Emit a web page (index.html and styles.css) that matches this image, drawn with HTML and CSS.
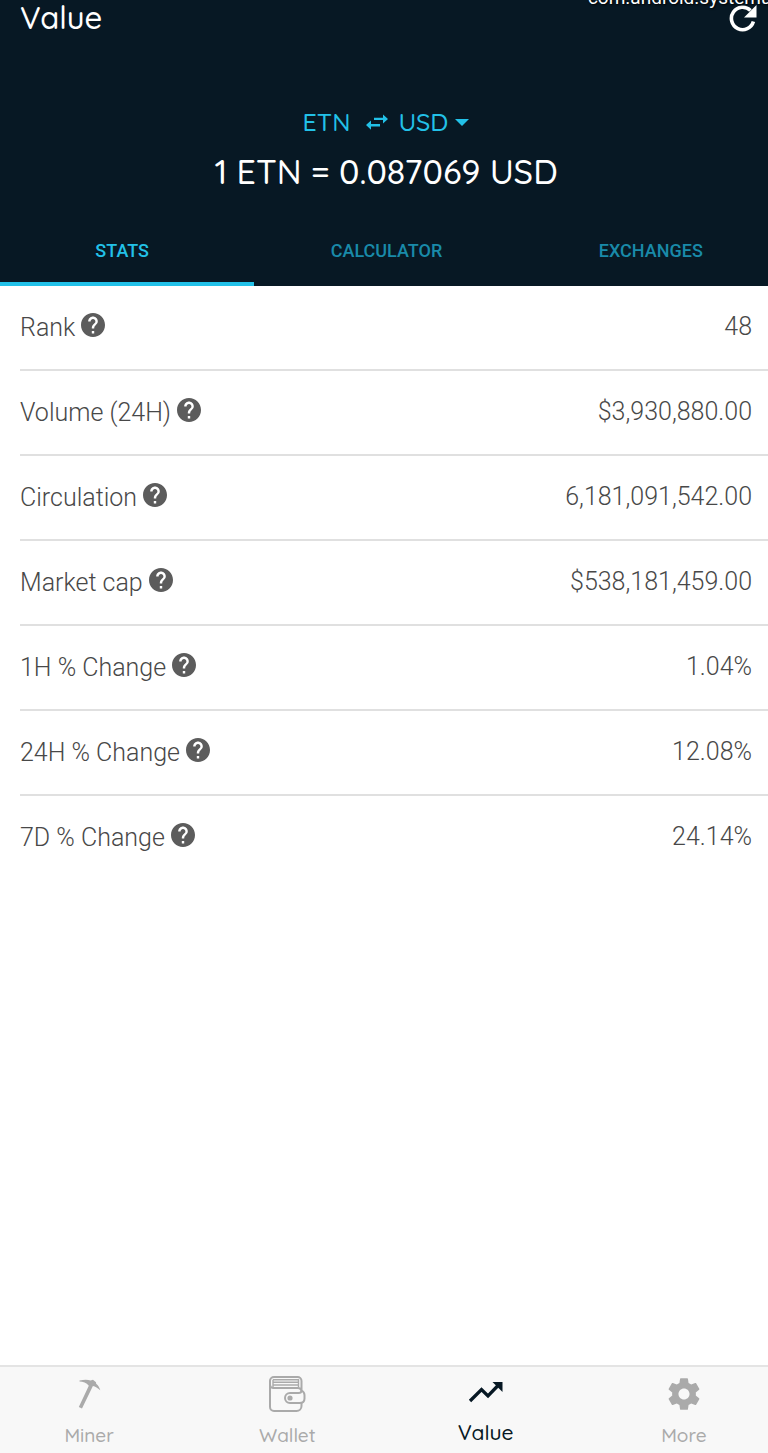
FILE: index.html
```
<!DOCTYPE html>
<html lang="en">
<head>
  <meta charset="UTF-8">
  <meta name="viewport" content="width=device-width, initial-scale=1.0">
  <title>Value</title>
  <link rel="stylesheet" href="styles.css">
</head>
<body>

  <svg class="sprite" aria-hidden="true">
    <symbol id="help" viewBox="2 2 20 20">
      <path d="M12 2C6.48 2 2 6.48 2 12s4.48 10 10 10 10-4.48 10-10S17.52 2 12 2zm1 17h-2v-2h2v2zm2.07-7.75l-.9.92C13.45 12.9 13 13.5 13 15h-2v-.5c0-1.1.45-2.1 1.17-2.83l1.24-1.26c.37-.36.59-.86.59-1.41 0-1.1-.9-2-2-2s-2 .9-2 2H8c0-2.21 1.79-4 4-4s4 1.79 4 4c0 .88-.36 1.68-.93 2.25z"/>
    </symbol>
  </svg>

  <header class="header">
    <div class="overlay">com.android.systemui</div>

    <div class="topbar">
      <h1>Value</h1>
      <button class="refresh" aria-label="Refresh">
        <svg viewBox="0 0 28 28"><path d="M24.4 17.5A11.2 11.2 0 1 1 21.5 6.5" fill="none" stroke="#fff" stroke-width="3.6"/><path d="M27.5 1v12.5H15z" fill="#fff"/></svg>
      </button>
    </div>

    <!-- Currency pair -->
    <div class="pair">
      <span>ETN</span>
      <button class="swap" aria-label="Swap currencies">
        <svg viewBox="0 0 22 16"><path d="M8 3.7h9V.4l5 4.6-5 4.6V6.1H8zM14 10v2.4H5v3.3L0 11l5-4.6V10z"/></svg>
      </button>
      <label class="currency">
        <select aria-label="Currency">
          <option>USD</option>
        </select>
        <svg viewBox="0 0 14 7"><path d="M0 0h14L7 7z"/></svg>
      </label>
    </div>
    <p class="rate">1 ETN = 0.087069 USD</p>

    <nav class="tabs">
      <a href="#stats" class="active">STATS</a>
      <a href="#calculator">CALCULATOR</a>
      <a href="#exchanges">EXCHANGES</a>
    </nav>
  </header>

  <main id="stats">
    <table class="stats">
      <tr>
        <th scope="row">Rank <button class="help" aria-label="About rank"><svg><use href="#help"/></svg></button></th>
        <td>48</td>
      </tr>
      <tr>
        <th scope="row">Volume (24H) <button class="help" aria-label="About volume"><svg><use href="#help"/></svg></button></th>
        <td>$3,930,880.00</td>
      </tr>
      <tr>
        <th scope="row">Circulation <button class="help" aria-label="About circulation"><svg><use href="#help"/></svg></button></th>
        <td>6,181,091,542.00</td>
      </tr>
      <tr>
        <th scope="row">Market cap <button class="help" aria-label="About market cap"><svg><use href="#help"/></svg></button></th>
        <td>$538,181,459.00</td>
      </tr>
      <tr>
        <th scope="row">1H % Change <button class="help" aria-label="About 1H change"><svg><use href="#help"/></svg></button></th>
        <td>1.04%</td>
      </tr>
      <tr>
        <th scope="row">24H % Change <button class="help" aria-label="About 24H change"><svg><use href="#help"/></svg></button></th>
        <td>12.08%</td>
      </tr>
      <tr>
        <th scope="row">7D % Change <button class="help" aria-label="About 7D change"><svg><use href="#help"/></svg></button></th>
        <td>24.14%</td>
      </tr>
    </table>
  </main>

  <!-- Bottom menu -->
  <nav class="bottom-nav">
    <a href="#miner">
      <svg viewBox="0 0 38 38">
        <path d="M9.5 5.6C14 4.4 18 4.6 20.5 5.4l2.5-.6 3 2.4.2 1.6c2 1.7 3.2 3.7 4.1 6.4-2.6-2.3-5-3.6-7.4-4.2L12 33.6l-3.2-1.6L18.8 10.7C16.5 8 13 6.7 9.5 6.6z"/>
      </svg>
      <span>Miner</span>
    </a>
    <a href="#wallet">
      <svg viewBox="0 0 38 38" fill="none" stroke="#aaa" stroke-width="2">
        <path d="M33.5 15V6a4 4 0 0 0-4-4H6a4 4 0 0 0-4 4v26a4 4 0 0 0 4 4h22.5a5 5 0 0 0 5-5v-3.5M2 9.5a3.5 3.5 0 0 0 3.5 3.5H30a3.5 3.5 0 0 1 3.5 3.5"/>
        <path d="M33.5 15.5c0 2-1 2.5-3 2.5H22a5 5 0 0 0 0 10h9.5c3 0 5-1.5 5-4.5v-3.5c0-2-1.2-3.5-3-4.5"/>
        <path d="M5 4.8h25.5v7.5M5 4.8v7.5M5 7.2h25M5 10h25" stroke-width="1.4"/>
        <circle cx="22" cy="23" r="1.6" fill="#aaa"/>
      </svg>
      <span>Wallet</span>
    </a>
    <a href="#value" class="active">
      <svg viewBox="0 0 38 38">
        <path d="M3 26L14.5 14.5l6.5 6.5 11-11.5" fill="none" stroke="#071824" stroke-width="3.3"/>
        <path d="M35.5 7v10L25.5 7z"/>
      </svg>
      <span>Value</span>
    </a>
    <a href="#more">
      <svg viewBox="0 0 24 24">
        <path d="M19.43 12.98c.04-.32.07-.64.07-.98s-.03-.66-.07-.98l2.11-1.65c.19-.15.24-.42.12-.64l-2-3.46c-.12-.22-.39-.3-.61-.22l-2.49 1c-.52-.4-1.08-.73-1.69-.98l-.38-2.65C14.46 2.18 14.25 2 14 2h-4c-.25 0-.46.18-.49.42l-.38 2.65c-.61.25-1.17.59-1.69.98l-2.49-1c-.23-.09-.49 0-.61.22l-2 3.46c-.13.22-.07.49.12.64l2.11 1.65c-.04.32-.07.65-.07.98s.03.66.07.98l-2.11 1.65c-.19.15-.24.42-.12.64l2 3.46c.12.22.39.3.61.22l2.49-1c.52.4 1.08.73 1.69.98l.38 2.65c.03.24.24.42.49.42h4c.25 0 .46-.18.49-.42l.38-2.65c.61-.25 1.17-.59 1.69-.98l2.49 1c.23.09.49 0 .61-.22l2-3.46c.12-.22.07-.49-.12-.64l-2.11-1.65zM12 15.5c-1.93 0-3.5-1.57-3.5-3.5s1.57-3.5 3.5-3.5 3.5 1.57 3.5 3.5-1.57 3.5-3.5 3.5z"/>
      </svg>
      <span>More</span>
    </a>
  </nav>

</body>
</html>
```
FILE: styles.css
```
* {
  box-sizing: border-box;
}

body {
  margin: 0;
  min-height: 100vh;
  display: flex;
  flex-direction: column;
  background: white;
  color: #484848;
  font-family: Roboto, sans-serif;
  font-size: 25px;
  line-height: 32px;
  overflow-x: hidden;
}

button, select {
  background: none;
  border: none;
  padding: 0;
  margin: 0;
  color: inherit;
  font: inherit;
  cursor: pointer;
}

a {
  text-decoration: none;
}

svg {
  display: block;
}

.sprite {
  position: absolute;
  width: 0;
  height: 0;
}

/* HEADER */
.header {
  position: relative;
  overflow: hidden;
  background: #071824;
  color: white;
  font-family: Quicksand, Lato, sans-serif;
  font-weight: 500;
}

/* debug text over the status bar */
.overlay {
  position: absolute;
  top: -14px;
  right: -8px;
  font-family: Roboto, sans-serif;
  font-size: 19px;
  font-weight: 400;
  line-height: 24px;
  text-shadow: 1px 1px 2px black;
}

.topbar {
  display: flex;
  justify-content: space-between;
  padding: 2px 11px 0 20px;
}

h1 {
  margin: 0;
  font-size: 31px;
  font-weight: 500;
}

.refresh svg {
  width: 28px;
  height: 28px;
}

.pair {
  display: flex;
  align-items: center;
  justify-content: center;
  margin-top: 72px;
  padding-left: 4px;
  color: #22c1e8;
  fill: #22c1e8;
}

.swap {
  margin: 0 10px 0 16px;
}

.swap svg {
  width: 22px;
  height: 16px;
}

.currency {
  display: flex;
  align-items: center;
  gap: 7px;
}

.currency select {
  appearance: none;
}

.currency svg {
  width: 14px;
  height: 7px;
  pointer-events: none;
}

.rate {
  margin: 14px 0 0;
  padding-left: 4px;
  text-align: center;
  font-size: 34px;
  line-height: 40px;
}

.tabs {
  display: flex;
  margin: 24px -15px 0 -10px;
  font-family: Roboto, sans-serif;
  font-size: 18px;
  text-align: center;
}

.tabs a {
  flex: 1;
  height: 70px;
  padding-top: 19px;
  color: #198aa9;
  border-bottom: 4px solid transparent;
}

.tabs .active {
  color: #22c1e8;
  border-color: #22c1e8;
}

/* STATS */
main {
  flex: 1;
  padding-left: 20px;
}

.stats {
  width: 100%;
  border-collapse: separate;
  border-spacing: 0;
}

.stats th, .stats td {
  height: 85px;
  padding: 0;
  border-bottom: 2px solid #e0e0e0;
  font-weight: 300;
}

.stats tr:last-child > * {
  border-color: transparent;
}

.stats th {
  padding-top: 2px;
  text-align: left;
}

.stats td {
  padding: 0 16px 2px 0;
  text-align: right;
}

.help {
  vertical-align: middle;
}

.help svg {
  width: 24px;
  height: 24px;
  margin-bottom: 8px;
  fill: #5c5c5c;
}

/* BOTTOM MENU */
.bottom-nav {
  display: flex;
  height: 88px;
  padding: 8px 0 0;
  margin: 0 -15px 0 -10px;
  background: #f8f8f8;
  border-top: 2px solid #e4e4e4;
  font-family: Quicksand, Lato, sans-serif;
  font-size: 19px;
  font-weight: 500;
  line-height: 24px;
}

.bottom-nav a {
  flex: 1;
  display: flex;
  flex-direction: column;
  align-items: center;
  gap: 10px;
  color: #aaa;
  fill: #aaa;
}

.bottom-nav svg {
  width: 38px;
  height: 38px;
}

.bottom-nav .active {
  gap: 7px;
  color: #071824;
  fill: #071824;
  font-size: 21px;
}
```
